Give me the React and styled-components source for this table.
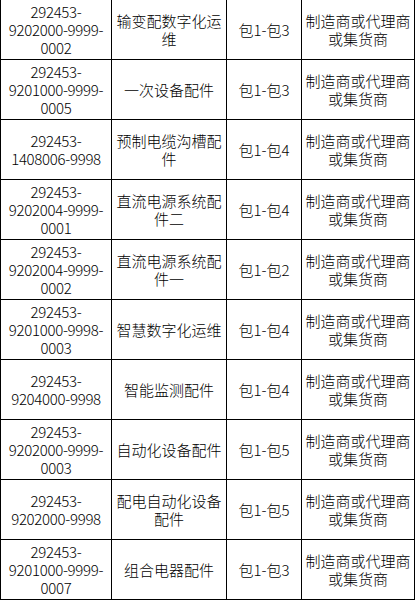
import React from 'react';
import styled, { createGlobalStyle } from 'styled-components';

const GlobalStyle = createGlobalStyle`
    html, body {
        margin: 0;
        padding: 0;
        background: #fff;
    }
    body {
        font-family: "Noto Sans CJK SC", "Liberation Sans", sans-serif;
        color: #000;
    }
`;

const Table = styled.div`
    display: grid;
    grid-template-columns: 111px 115px 75px 113px;
    grid-auto-rows: 60px;
    width: 415px;
    margin-top: -1px;
    border-left: 1px solid #000;
    border-top: 1px solid #000;
`;

const Cell = styled.div`
    display: flex;
    align-items: center;
    justify-content: center;
    text-align: center;
    padding: 0 3px;
    border-right: 1px solid #000;
    border-bottom: 1px solid #000;
    font-size: 15px;
    font-weight: 300;
    line-height: 18px;
    overflow: hidden;
`;

const CodeCell = styled(Cell)`
    font-variant-numeric: tabular-nums;
    letter-spacing: -0.3px;
    padding: 0 2px;
`;

const rows = [
    { code: '292453-9202000-9999-0002', name: '输变配数字化运维', pack: '包1-包3' },
    { code: '292453-9201000-9999-0005', name: '一次设备配件', pack: '包1-包3' },
    { code: '292453-1408006-9998', name: '预制电缆沟槽配件', pack: '包1-包4' },
    { code: '292453-9202004-9999-0001', name: '直流电源系统配件二', pack: '包1-包4' },
    { code: '292453-9202004-9999-0002', name: '直流电源系统配件一', pack: '包1-包2' },
    { code: '292453-9201000-9998-0003', name: '智慧数字化运维', pack: '包1-包4' },
    { code: '292453-9204000-9998', name: '智能监测配件', pack: '包1-包4' },
    { code: '292453-9202000-9999-0003', name: '自动化设备配件', pack: '包1-包5' },
    { code: '292453-9202000-9998', name: '配电自动化设备配件', pack: '包1-包5' },
    { code: '292453-9201000-9999-0007', name: '组合电器配件', pack: '包1-包3' },
];

const App = () => (
    <>
        <GlobalStyle />
        <Table>
            {rows.map((row) => (
                <React.Fragment key={row.code}>
                    <CodeCell>{row.code}</CodeCell>
                    <Cell>{row.name}</Cell>
                    <Cell>{row.pack}</Cell>
                    <Cell>制造商或代理商或集货商</Cell>
                </React.Fragment>
            ))}
        </Table>
    </>
);

export default App;
